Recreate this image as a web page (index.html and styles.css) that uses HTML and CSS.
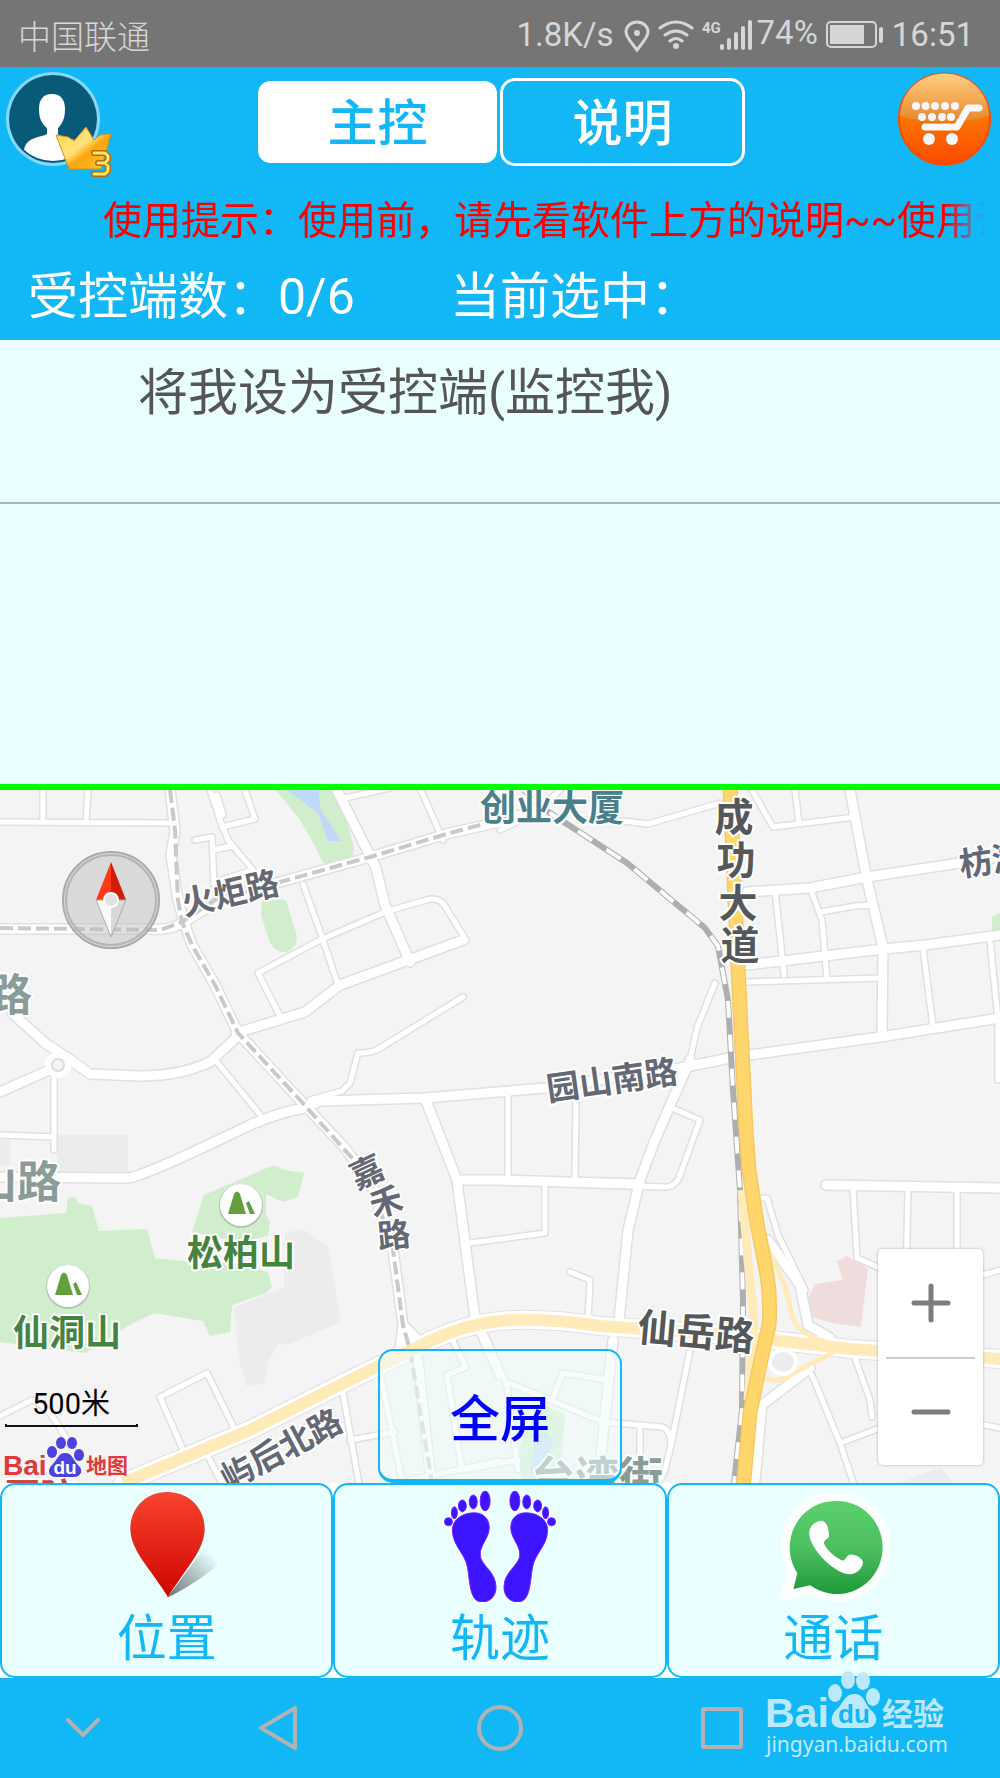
FILE: index.html
```html
<!DOCTYPE html>
<html lang="zh-CN">
<head>
<meta charset="utf-8">
<meta name="viewport" content="width=device-width, initial-scale=1">
<title>主控</title>
<link rel="stylesheet" href="styles.css">
</head>
<body>
<div class="app">
  <div class="status">
    <span class="carrier">中国联通</span>
    <span>1.8K/s</span>
    <svg class="signals" viewBox="625 16 130 34" aria-hidden="true">
      <path class="pin-line" d="M639 48C633 40 628 35 628 30a11 10 0 0 1 22 0c0 5-5 10-11 18z"/>
      <circle cx="639" cy="31" r="3"/>
      <path class="wave" d="M662 26q16-12 32 0M667 33q11-8 22 0M672 39q6-5 12 0"/>
      <circle cx="678" cy="44" r="3"/>
      <text x="704" y="31">4G</text>
      <path class="bars" d="M724 44v2M731 38v8M738 32v14M745 26v20M752 20v26"/>
    </svg>
    <span class="percent">74%</span>
    <svg class="battery" viewBox="829 19 58 28" aria-hidden="true">
      <rect class="shell" x="830" y="20" width="49" height="25" rx="4"/>
      <rect x="833" y="23" width="34" height="19"/>
      <rect x="882" y="25" width="4" height="16" rx="2"/>
    </svg>
    <span>16:51</span>
  </div>

  <header class="header">
    <div class="topbar">
      <button class="round avatar" type="button" aria-label="我的">
        <svg viewBox="5 71 108 108">
          <defs>
            <linearGradient id="gold" x1="0" y1="0" x2="1" y2="1"><stop offset="0" stop-color="#ffd84a"/><stop offset=".45" stop-color="#ffe27a"/><stop offset=".6" stop-color="#f9a50c"/><stop offset="1" stop-color="#ffc93a"/></linearGradient>
            <clipPath id="face"><circle cx="53" cy="118" r="43"/></clipPath>
          </defs>
          <circle cx="53" cy="119" r="47" fill="#84d9fb"/>
          <circle cx="53" cy="119" r="44" fill="#095a78"/>
          <path clip-path="url(#face)" fill="#fff" d="M52 94c9 0 13 6 13 15 0 10-3 15-7 19v6c2 4 20 2 24 15l-4 13H24V150c2-14 20-13 23-16v-6c-5-4-8-9-8-19 0-9 4-15 13-15z"/>
          <path fill="url(#gold)" stroke="#d98a20" d="M56 135l12 2 6 4 12-14 8 13 6-5 11-1-10 35H69z"/>
          <path fill="none" stroke="#b5690d" stroke-width="6" stroke-linejoin="round" stroke-linecap="round" d="M94 153h11l3 3v4l-3 3h-7M105 163l3 3v5l-3 3H94"/>
          <path fill="none" stroke="#ffe86a" stroke-width="3" stroke-linejoin="round" stroke-linecap="round" d="M94 153h11l3 3v4l-3 3h-7M105 163l3 3v5l-3 3H94"/>
        </svg>
      </button>
      <div class="tabs">
        <button class="tab active" type="button">主控</button>
        <button class="tab" type="button">说明</button>
      </div>
      <button class="round cart" type="button" aria-label="购物车">
        <svg viewBox="896 74 96 96">
          <defs>
            <linearGradient id="orange" x1="0" y1="0" x2="0" y2="1"><stop offset="0" stop-color="#ff9200"/><stop offset=".5" stop-color="#fb7300"/><stop offset="1" stop-color="#fb4a00"/></linearGradient>
            <linearGradient id="gloss" x1="0" y1="0" x2="0" y2="1"><stop offset="0" stop-color="#ffd083"/><stop offset="1" stop-color="#e6872a"/></linearGradient>
          </defs>
          <circle cx="944.500" cy="122" r="45.500" fill="url(#orange)" stroke="#fb4c00" stroke-width="2"/>
          <path fill="url(#gloss)" d="M900 119a44 42 0 0 1 89 0q-45 12-89 0z"/>
          <g fill="#f4f6ff"><circle cx="916" cy="109" r="4"/><circle cx="925.500" cy="109" r="4"/><circle cx="935" cy="109" r="4"/><circle cx="945" cy="109" r="4"/><circle cx="955" cy="109" r="4"/><circle cx="922" cy="120" r="4"/><circle cx="932" cy="120" r="4"/><circle cx="942" cy="120" r="4"/><circle cx="951" cy="120" r="4"/><circle cx="929" cy="142" r="6"/><circle cx="952" cy="142" r="6"/></g>
          <path fill="none" stroke="#f8f9ff" stroke-width="7" stroke-linecap="round" stroke-linejoin="round" d="M925 130h32l11-19h11"/>
        </svg>
      </button>
    </div>
    <p class="tip">使用提示：使用前，请先看软件上方的说明~~使用说明</p>
    <p class="counts"><span class="count">受控端数：0/6</span><span>当前选中：</span></p>
  </header>

  <main class="panel">
    <button class="device" type="button">将我设为受控端(监控我)</button>
  </main>

  <section class="map" aria-label="地图">
    <svg class="canvas" viewBox="0 790 1000 693">
      <defs>
        <g id="minor">
          <path d="M0 822L170 823M43 790V822M88 790L86 822M210 790L220 820 228 840 253 870 215 882M195 840L212 837 214 885M213 850L232 846M222 827L255 819 245 790M217 795L223 815M345 798L390 788M420 788L443 840"/>
          <path d="M303 884L322 937 338 985M280 1016L258 973 320 940 385 912 430 899Q440 898 445 906L466 940 413 960M217 1062L262 1117M54 1072V1150M0 1135L54 1137M463 997L380 1048Q374 1053 358 1053L350 1083 342 1091 310 1100"/>
          <path d="M508 1096V1182M576 1095L575 1180M672 1108L700 1120 680 1175Q676 1187 665 1187L500 1182M545 1184V1233L470 1243M715 983L697 1028 690 1060M570 1272L590 1280 588 1320"/>
          <path d="M0 1416L32 1400Q48 1404 70 1445M186 1457L160 1397 207 1373 235 1430M205 1450L225 1490M343 1393L360 1490M350 1440L395 1432M380 1372L402 1480M450 1335L466 1367 447 1375 462 1470 518 1460M485 1335L507 1385 518 1470M507 1382L603 1422 662 1427Q671 1430 671 1445L665 1470 655 1490M640 1425V1475M553 1398L563 1373 608 1380M690 1350L671 1445M410 1480L500 1461"/>
          <path d="M752 790L773 827 855 817M795 790L799 823M775 890L784 975M811 890L822 920 827 980M821 912L855 906 872 905M747 982L883 978M923 948L933 1027M990 940L998 1020V1080M500 830Q535 815 560 790M623 821L648 824 720 803"/>
          <path d="M853 1188L857 1258 880 1268Q940 1290 1000 1270M908 1190L906 1280M957 1190V1280M812 1375L840 1443 855 1488M840 1443L880 1428Q940 1415 1000 1428M855 1358L870 1400 872 1417M763 1198H767L778 1235 805 1290"/>
        </g>
        <g id="major">
          <path d="M170 790L175 830 171 855 178 900 184 922 192 945 215 985 238 1033 300 1100 345 1148 372 1185 393 1250 403 1325 418 1360 432 1490M0 929H150Q170 931 184 922L215 903 280 882 370 857 450 833 500 822 540 808M337 790L368 852 376 868 385 905 410 962M236 1033L305 1012 340 985 463 940M12 1013L45 1043 68 1058 90 1074 140 1076Q180 1076 210 1062L238 1036M0 1092L45 1072 58 1065"/>
          <path d="M0 1177L128 1178Q145 1176 250 1125 280 1112 305 1108L320 1101 425 1098 545 1088 680 1068 735 1057 880 1037 1000 1018M425 1098L457 1180 466 1250 476 1325M460 1180H500L640 1184M690 1060L655 1140 640 1180 628 1230 618 1330M613 1340L598 1483"/>
          <path d="M747 892L810 888 867 877 1000 857M850 790L867 880 883 947 882 1037M747 965L884 949 925 945 1000 935M826 1185L1000 1188M768 1240L800 1285 808 1325 830 1338M810 1368L762 1405 755 1480M403 1325L400 1350M403 1325L420 1342M476 1320L500 1375"/>
        </g>
        <path id="highway" d="M123 1483L250 1430 350 1380 420 1346 Q460 1325 500 1321T600 1326L730 1335 850 1349 1000 1359"/>
        <path id="express" d="M730 788L738 967 746 1130 749 1170 757 1223 767 1275Q771 1300 769 1325L762 1355 750 1413 743 1490"/>
        <g id="hill">
          <circle r="22" cy="1" fill="#777" opacity=".35"/><circle r="21" fill="#fff"/>
          <path fill="#649f3d" d="M-13 9L-7-11q3-5 6 0L5 9zM5-2l3-2L14 9H9z"/>
        </g>
        <linearGradient id="needle"><stop offset=".5" stop-color="#ff3a17"/><stop offset=".5" stop-color="#cf1e05"/></linearGradient>
        <linearGradient id="tail"><stop offset=".5" stop-color="#fafaf8"/><stop offset=".5" stop-color="#d9d9d6"/></linearGradient>
      </defs>

      <rect y="790" width="1000" height="693" fill="#f4f4f4"/>
      <path fill="#ececec" d="M57 1135H128V1172H57zM0 1140h10v25H0zM285 1233L303 1229 328 1246 341 1322 290 1344 278 1345 268 1362 265 1383 247 1387 239 1362 234 1307 284 1288zM898 1483L940 1468 955 1483z"/>
      <g fill="#d0edcc">
        <path d="M276 790L300 820 313 842 323 863Q340 865 352 858L354 848 346 818 336 790z"/>
        <path d="M262 901Q270 895 286 901L296 932Q300 947 286 952 275 954 269 940L261 915z"/>
        <path d="M0 1218L66 1213 68 1197 77 1198V1203L92 1206 99 1231 147 1229 155 1258 181 1261 230 1262 268 1272 272 1287 266 1293 232 1305 230 1332 210 1336 203 1321 154 1313 131 1324 100 1344 85 1353 0 1342z"/>
        <path d="M204 1195L274 1165 284 1170 304 1173 298 1197 283 1202 266 1194V1215L270 1222 268 1236 240 1242 192 1232z"/>
        <path d="M992 917l8-4v17h-8zM540 1403L565 1415 560 1475 522 1483 520 1445z"/>
      </g>
      <path fill="#bedaf8" d="M287 790L318 813 328 841 341 841 320 808 319 790zM535 1437L543 1428 554 1440 545 1462 530 1475z"/>
      <path fill="#efdddd" d="M837 1261L847 1256 868 1269 861 1327 832 1323 811 1317 807 1300 815 1284 843 1280z"/>

      <g class="road case"><use href="#minor" class="w8"/><use href="#major" class="w12"/><use href="#highway" class="w20"/></g>
      <g class="road fill"><use href="#minor" class="w5"/><use href="#major" class="w9"/><use href="#highway" class="w18"/></g>
      <circle cx="58" cy="1065" r="10" fill="#fff" stroke="#fff" stroke-width="6"/>
      <circle cx="58" cy="1065" r="6" fill="#f4f4f4" stroke="#dcdcdc" stroke-width="2"/>
      <path class="metro" d="M170 790L175 830 176 855 178 900 182 922 192 945 215 985 238 1033 300 1100 352 1158 372 1185 393 1250 403 1325 410 1350 432 1483M0 928L160 930 182 922 215 900 280 882 370 857 450 833 510 817"/>
      <path class="rail-edge" d="M524 790L547 811 627 863 705 928 718 946 728 1000 733 1090 740 1190 743 1300 742 1410 734 1483"/>
      <path class="rail-mark" d="M524 790L547 811 627 863 705 928 718 946 728 1000 733 1090 740 1190 743 1300 742 1410 734 1483"/>
      <g class="road ramp"><use href="#highway" class="w12"/><path class="w9" d="M742 1190L748 1260 754 1320 748 1400"/><path class="w5" d="M766 1245L785 1285 792 1315Q797 1335 830 1343M765 1378Q778 1385 795 1372L840 1349"/></g>
      <ellipse cx="783" cy="1362" rx="13" ry="12" fill="#ececec" stroke="#fff" stroke-width="4"/>
      <g class="road"><use href="#express" class="w15" stroke="#f7c860"/><use href="#express" class="w12" stroke="#ffd66b"/></g>

      <g class="labels">
        <text class="street" transform="rotate(-13 230 893)" x="230" y="905">火炬路</text>
        <text class="building" x="552" y="821">创业大厦</text>
        <text class="artery"><tspan x="734" y="831">成</tspan><tspan x="736" y="874">功</tspan><tspan x="738" y="917">大</tspan><tspan x="740" y="959">道</tspan></text>
        <text class="street" transform="rotate(-8 992 860)" x="992" y="872">枋湖</text>
        <text class="street" transform="rotate(-8 612 1080)" x="612" y="1092">园山南路</text>
        <text class="district" x="10" y="1011">路</text>
        <text class="district" x="17" y="1198">山路</text>
        <text class="street" transform="rotate(-25 367 1172)" x="367" y="1184">嘉</text>
        <text class="street" transform="rotate(-15 386 1202)" x="386" y="1214">禾</text>
        <text class="street" transform="rotate(-6 394 1235)" x="394" y="1247">路</text>
        <text class="hillname" x="241" y="1266">松柏山</text>
        <text class="hillname" x="67" y="1346">仙洞山</text>
        <text class="street" transform="rotate(-28 281 1447)" x="280" y="1461">屿后北路</text>
        <text class="artery" transform="rotate(5 696 1332)" x="696" y="1346">仙岳路</text>
        <text class="district" x="597" y="1494">台湾街</text>
        <text class="hospital" x="40" y="1510">医院</text>
      </g>
      <use href="#hill" x="241" y="1205"/>
      <use href="#hill" x="68" y="1286"/>

      <circle cx="111" cy="900" r="48" fill="#bbb" fill-opacity=".45" stroke="#aaa" stroke-width="2"/>
      <circle cx="111" cy="900" r="45" fill="none" stroke="#b4b4b4" stroke-width="2"/>
      <path fill="url(#needle)" d="M111 862l15 38H96z"/>
      <path fill="url(#tail)" stroke="#aaa" d="M111 937l15-37H96z"/>
      <circle cx="111" cy="900" r="7" fill="#e4e2e0" stroke="#fff" stroke-width="2"/>

      <text class="scale" x="71" y="1414">500米</text>
      <path d="M6 1424v2H137v-2" fill="none" stroke="#111" stroke-width="2"/>
      <g class="maplogo">
        <text x="3" y="1475">Bai</text>
        <g fill="#4b43e0"><ellipse cx="52" cy="1452" rx="5" ry="6"/><ellipse cx="61" cy="1443" rx="5" ry="6"/><ellipse cx="72" cy="1443" rx="5" ry="6"/><ellipse cx="79" cy="1455" rx="5" ry="6"/><path d="M65 1453c8 0 8 8 14 13 5 5 1 11-5 11H56c-7 0-9-6-5-11 6-5 7-13 14-13z"/></g>
        <text class="du" x="65" y="1474">du</text>
        <text class="zh" x="86" y="1473">地图</text>
      </g>
    </svg>
    <button class="full" type="button">全屏</button>
    <div class="zoomer">
      <button type="button" aria-label="放大"><svg viewBox="0 0 40 40"><path d="M20 3v34M3 20h34"/></svg></button>
      <button type="button" aria-label="缩小"><svg viewBox="0 0 40 40"><path d="M3 20h34"/></svg></button>
    </div>
  </section>

  <div class="actions">
    <button type="button">
      <svg viewBox="111 1491 112 112">
        <defs>
          <linearGradient id="red" x1="0" y1="0" x2="0" y2="1"><stop offset="0" stop-color="#f8452f"/><stop offset="1" stop-color="#cf0500"/></linearGradient>
          <linearGradient id="shade" x1="0" y1="1" x2="1" y2="0"><stop offset="0" stop-color="#667272"/><stop offset=".85" stop-color="#eaffff"/></linearGradient>
        </defs>
        <path fill="url(#shade)" d="M167 1599L205 1548Q222 1545 221 1560 214 1574 167 1599z"/>
        <path fill="url(#red)" d="M167 1492c22 0 38 16 38 37 0 22-20 41-37 69-17-28-38-47-38-69 0-21 16-37 37-37z"/>
      </svg>
      位置
    </button>
    <button type="button">
      <svg viewBox="444 1491 112 112" fill="#3d14ff" stroke="#7a1cff" stroke-width="1">
        <defs>
          <g id="foot">
            <path d="M474 1513c10 0 16 7 15 17-1 9-9 16-9 25 0 11 16 17 16 33 0 9-6 15-14 15-13 0-12-20-15-36-3-14-15-21-15-37 0-10 10-17 22-17z"/>
            <ellipse cx="485" cy="1501" rx="5" ry="10"/><ellipse cx="473" cy="1502" rx="4" ry="7"/><ellipse cx="462" cy="1506" rx="4" ry="6"/><ellipse cx="454" cy="1513" rx="3" ry="6"/><ellipse cx="448" cy="1522" rx="4" ry="4"/>
          </g>
        </defs>
        <use href="#foot"/><use href="#foot" transform="translate(1000 0) scale(-1 1)"/>
      </svg>
      轨迹
    </button>
    <button type="button">
      <svg viewBox="777 1491 112 112">
        <defs><linearGradient id="green" x1="0" y1="0" x2="0" y2="1"><stop offset="0" stop-color="#5ad06c"/><stop offset=".5" stop-color="#4dc060"/><stop offset="1" stop-color="#20993a"/></linearGradient></defs>
        <path fill="#fbfffe" d="M836 1491a54 56 0 1 1-26 104l-32 8 9-30a54 56 0 0 1 49-82z"/>
        <path fill="url(#green)" d="M836 1501a46 47 0 1 1-26 85l-17 4 4-16a46 47 0 0 1 39-73z"/>
        <path fill="#fff" d="M821 1521c6 0 8 9 8 15 0 4-6 4-5 8 2 6 11 14 18 17 4 1 4-6 9-6 6 0 11 4 12 7 1 5-5 13-13 13-14 0-41-25-41-42 0-6 6-12 12-12z"/>
      </svg>
      通话
    </button>
  </div>

  <nav class="nav" aria-label="系统导航">
    <button type="button" aria-label="收起"><svg viewBox="0 0 50 50"><path d="M10 17l15 15 15-15"/></svg></button>
    <button type="button" aria-label="返回"><svg viewBox="0 0 50 50"><path d="M8 25L42 5V45z"/></svg></button>
    <button type="button" aria-label="主页"><svg viewBox="0 0 50 50"><circle cx="25" cy="25" r="21"/></svg></button>
    <button type="button" aria-label="任务"><svg viewBox="0 0 50 50"><rect x="6" y="6" width="38" height="38" rx="1"/></svg></button>
    <div class="watermark">
      <svg viewBox="766 1670 180 60">
        <text class="latin" x="765" y="1727">Bai</text>
        <ellipse cx="835" cy="1693" rx="7" ry="9"/><ellipse cx="848" cy="1680" rx="7" ry="9"/><ellipse cx="863" cy="1681" rx="7" ry="9"/><ellipse cx="873" cy="1697" rx="7" ry="9"/>
        <path d="M854 1694c11 0 10 10 18 17 8 8 4 17-6 17h-24c-11 0-13-9-7-17 8-6 9-17 19-17z"/>
        <text class="du" x="854" y="1723">du</text>
        <text class="zh" x="882" y="1725">经验</text>
      </svg>
      <span>jingyan.baidu.com</span>
    </div>
  </nav>
</div>
</body>
</html>
```

FILE: styles.css
```css
* { box-sizing: border-box; }

body {
  margin: 0;
  background: #fff;
  font-family: Roboto, "Noto Sans CJK SC", sans-serif;
}

button {
  margin: 0;
  padding: 0;
  border: 0;
  background: none;
  font: inherit;
  color: inherit;
  cursor: pointer;
}

svg { display: block; }
p { margin: 0; }

.app {
  display: flex;
  flex-direction: column;
  min-height: 100vh;
}

/* Status bar */
.status {
  display: flex;
  align-items: center;
  height: 67px;
  padding: 2px 26px 0 18px;
  background: #757575;
  color: #d6d6d6;
  font-size: 33px;
  white-space: nowrap;
}
.carrier { margin-right: auto; font-weight: 300; }
.signals { width: 130px; height: 34px; margin: 0 4px 0 9px; fill: #d6d6d6; }
.signals text { font-size: 15px; font-weight: 700; }
.signals path { fill: none; stroke: #d6d6d6; stroke-linecap: round; }
.signals .pin-line, .signals .wave { stroke-width: 3; }
.signals .bars { stroke-width: 4; }
.percent { padding-bottom: 4px; }
.battery { width: 58px; height: 28px; margin: 0 8px; fill: #d6d6d6; }
.battery .shell { fill: none; stroke: #d6d6d6; stroke-width: 2; }

/* Header */
.header {
  height: 273px;
  background: #12b7f5;
  color: #fff;
}
.topbar {
  display: flex;
  justify-content: space-between;
  align-items: flex-start;
  padding: 4px 8px 0 5px;
}
.round svg { width: 108px; height: 108px; }
.cart svg { width: 96px; height: 96px; }
.tabs {
  display: flex;
  height: 88px;
  margin: 7px 9px 0 0;
}
.tab {
  width: 245px;
  padding-top: 4px;
  border: 3px solid #fff;
  border-radius: 15px;
  font-size: 50px;
  font-weight: 500;
  line-height: 78px;
}
.tab.active {
  background: #fff;
  background-clip: padding-box;
  border-color: #12b7f5;
  color: #12b7f5;
}
.tip {
  margin: 14px 15px 0 103px;
  overflow: hidden;
  color: #f00;
  font-size: 39px;
  line-height: 56px;
  white-space: nowrap;
  -webkit-mask-image: linear-gradient(to left, transparent, #000 40px);
  mask-image: linear-gradient(to left, transparent, #000 40px);
}
.counts {
  display: flex;
  padding: 12px 28px 0;
  font-size: 50px;
  line-height: 72px;
}
.count { width: 422px; }

/* Device list */
.panel {
  flex: 1 0 444px;
  background: #eaffff;
}
.device {
  display: block;
  width: 100%;
  height: 164px;
  padding: 0 138px 66px;
  border-bottom: 2px solid #aab4b4;
  color: #555;
  font-size: 50px;
  text-align: left;
}

/* Map */
.map {
  position: relative;
  border-top: 6px solid #0f0;
}
.canvas { width: 100%; height: auto; }
.road { fill: none; stroke-linejoin: round; }
.road.case { stroke: #e0e0e0; stroke-linecap: round; }
.road.fill { stroke: #fff; stroke-linecap: round; }
.road.ramp { stroke: #ffebba; }
.w5 { stroke-width: 5px; }
.w8 { stroke-width: 8px; }
.w9 { stroke-width: 9px; }
.w12 { stroke-width: 12px; }
.w15 { stroke-width: 15px; }
.w18 { stroke-width: 18px; }
.w20 { stroke-width: 20px; }
.metro { fill: none; stroke: #c9c9c9; stroke-width: 4; stroke-dasharray: 13 5; }
.rail-edge { fill: none; stroke: #aeaeae; stroke-width: 6; }
.rail-mark { fill: none; stroke: #fff; stroke-width: 4; stroke-dasharray: 17 17; }
.labels text {
  font-family: "Noto Sans CJK SC", sans-serif;
  font-weight: 700;
  text-anchor: middle;
  paint-order: stroke;
  stroke: #fff;
  stroke-width: 4;
  stroke-linejoin: round;
}
.labels .street { fill: #636874; font-size: 33px; }
.labels .building { fill: #4a7f8c; font-size: 36px; }
.labels .artery { fill: #55585a; font-size: 39px; }
.labels .district { fill: #8a9c98; font-size: 44px; }
.labels .hillname { fill: #45843f; font-size: 36px; }
.labels .hospital { fill: #c44; font-size: 36px; }
.scale { font-size: 29px; text-anchor: middle; }
.maplogo { fill: #e23a3a; font-family: "Liberation Sans", "Noto Sans CJK SC", sans-serif; font-weight: 700; font-size: 28px; }
.maplogo .du { fill: #fff; font-size: 19px; text-anchor: middle; }
.maplogo .zh { font-size: 21px; }

.full {
  position: absolute;
  left: 50%;
  bottom: 0;
  width: 244px;
  height: 134px;
  transform: translateX(-50%);
  border: 2px solid #12b7f5;
  border-bottom-width: 4px;
  border-radius: 15px;
  background: rgba(238, 251, 251, .55);
  color: #00f;
  font-size: 50px;
  font-weight: 500;
}
.zoomer {
  position: absolute;
  right: 17px;
  bottom: 18px;
  width: 105px;
  padding: 0 8px;
  border-radius: 5px;
  background: rgba(255, 255, 255, .97);
  box-shadow: 0 0 3px rgba(0, 0, 0, .3);
}
.zoomer button {
  display: grid;
  place-items: center;
  width: 100%;
  height: 108px;
}
.zoomer button + button { border-top: 2px solid #ccc; }
.zoomer svg { width: 40px; height: 40px; stroke: #7d7d7d; stroke-width: 5; stroke-linecap: round; }

/* Actions */
.actions {
  display: grid;
  grid-template-columns: repeat(3, 1fr);
}
.actions button {
  display: flex;
  flex-direction: column;
  align-items: center;
  height: 195px;
  padding-top: 6px;
  border: 2px solid #12b7f5;
  border-radius: 15px;
  background: #eaffff;
  color: #12b7f5;
  font-size: 50px;
  line-height: 74px;
}
.actions svg { width: 112px; height: 112px; }

/* System navigation */
.nav {
  position: relative;
  display: grid;
  grid-template-columns: 3fr 4fr 4fr 4fr 3fr;
  height: 100px;
  background: #12b7f5;
}
.nav button {
  display: grid;
  place-items: center;
}
.nav button svg {
  width: 50px;
  height: 50px;
  fill: none;
  stroke: #b2b2b2;
  stroke-width: 4;
  stroke-linecap: round;
  stroke-linejoin: round;
}
.watermark {
  position: absolute;
  right: 54px;
  bottom: 20px;
  width: 180px;
  color: #c3eafb;
  font-family: "Noto Sans", sans-serif;
  font-size: 21px;
  line-height: 28px;
  text-align: center;
}
.watermark svg { width: 180px; height: 60px; fill: #bce8fb; }
.watermark text { font-family: "Liberation Sans", "Noto Sans CJK SC", sans-serif; font-weight: 700; }
.watermark .latin { font-size: 41px; }
.watermark .du { fill: #12b7f5; font-size: 26px; text-anchor: middle; }
.watermark .zh { font-size: 31px; }
```
